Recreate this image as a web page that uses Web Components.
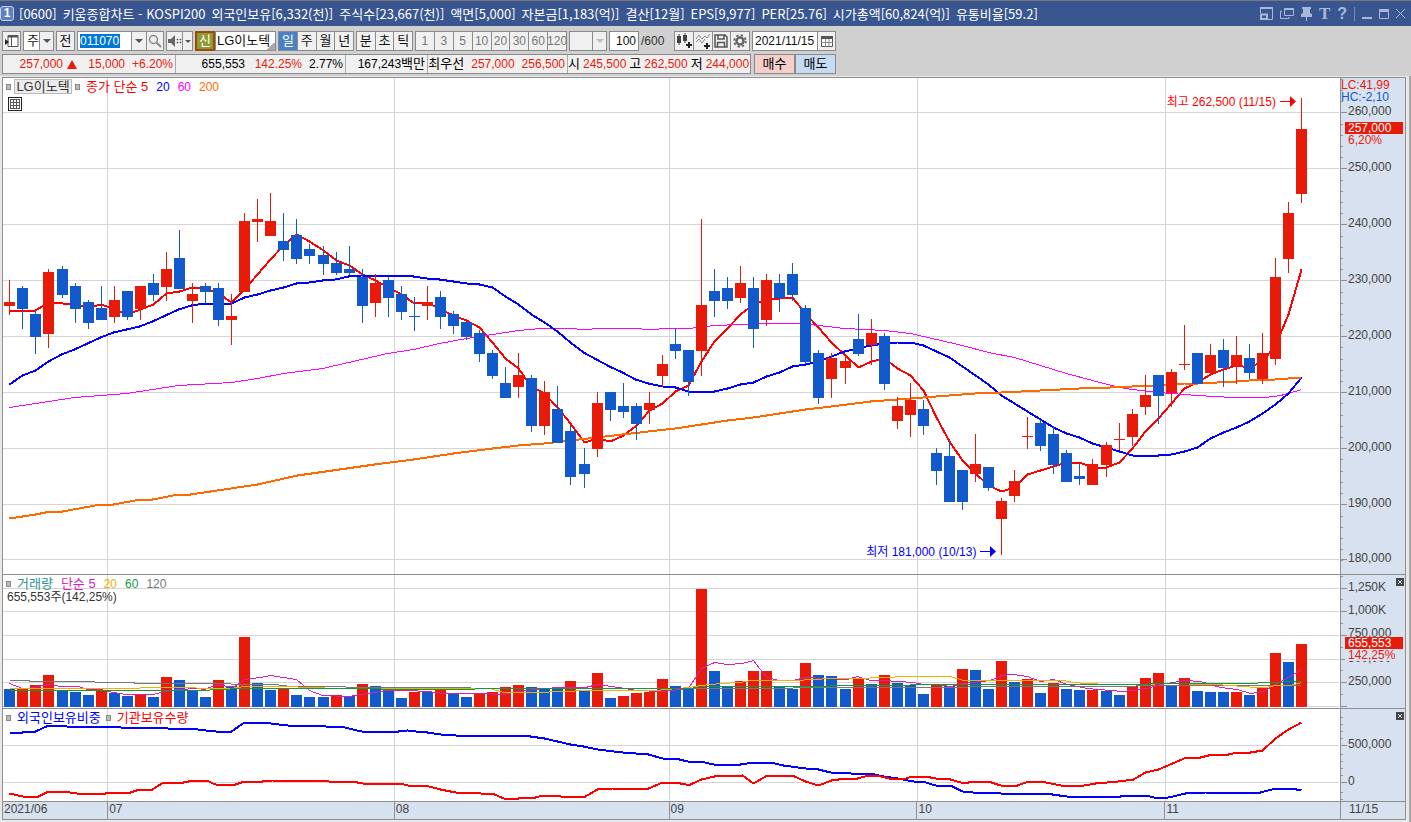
<!DOCTYPE html>
<html lang="ko">
<head>
<meta charset="utf-8">
<meta name="viewport" content="width=device-width, initial-scale=1">
<title>[0600] 키움종합차트</title>
<style>
  html, body { margin: 0; }
  body { min-height: 100vh; display: flex; flex-direction: column; background: #e8e8e8;
         font: 12px/14px "Liberation Sans", "Noto Sans CJK KR", sans-serif; color: #000; }
</style>
</head>
<body>
<hts-window></hts-window>

<script>
/* ---------- data ---------- */

/* One candle per trading day: direction, high, body top, body bottom, low (chart units, y down). */
const CANDLES = `R280,302,306,315 B286,288,309,329 B310,314,337,354 R269,272,334,348 B266,269,295,298
B283,286,309,323 B300,302,323,329 B286,308,320,320 R286,300,317,323 B291,291,317,320 R286,286,309,320
B274,283,295,301 R252,269,287,301 B230,258,289,289 R283,294,301,323 B283,286,292,303 B283,288,320,326
R294,316,320,345 R213,221,292,292 R199,219,222,242 R193,221,236,236 B213,241,250,261 B219,235,259,264
B244,249,256,264 B246,255,264,275 B252,263,273,275 B246,269,273,275 B269,277,306,323 R274,283,303,317
B277,280,298,317 B286,294,312,320 B297,316,317,331 R286,302,306,320 B291,297,317,329 B311,314,326,334
B322,322,337,340 B330,333,354,362 B350,353,376,379 B367,383,398,398 R353,375,387,398 B375,378,426,432
R381,392,426,435 B386,409,443,443 B425,431,477,485 B448,464,474,488 R392,403,449,457 B392,392,410,421
B383,406,412,418 B403,406,424,440 R392,403,410,424 R355,364,376,387 B328,344,351,359 B350,350,382,396
R219,305,351,376 B269,291,301,317 B277,288,301,309 R266,283,298,303 B277,288,329,348 R274,280,320,326
B274,283,298,312 B263,274,295,301 B305,308,362,364 B350,353,398,404 R353,358,379,398 R355,361,368,384
B314,339,354,356 R319,333,345,365 B333,336,384,390 R397,406,421,429 R383,400,415,437 B400,409,426,435
B448,453,471,485 B441,456,502,502 B470,470,502,510 R434,464,474,482 B467,467,488,491 R498,501,519,555
R470,481,496,502 R417,436,437,449 B420,423,446,451 B426,434,465,474 B450,453,482,482 B464,476,479,485
R459,464,485,485 R442,445,465,477 R423,439,440,450 R409,414,437,446 R375,395,407,415 B375,375,396,424
R369,372,393,407 R325,364,365,370 B353,353,384,384 R344,355,373,375 B339,350,368,387 R336,355,366,384
B344,358,373,379 R333,353,379,384 R258,277,359,365 R202,213,259,273 R98,129,194,203`
  .trim().split(/\s+/).map(s => [s[0], ...s.slice(1).split(",").map(Number)]);

/* Volume columns: direction and top edge. */
const VOLUMES = `B689 R689 R685 R675 B691 B692 B695 R691 B693 B696 R695 B697 R677 B680 B691 B697 R680 B686 R637 B683
B690 R688 B695 B697 B697 R695 B696 R684 B686 B687 B698 R692 B692 R690 B694 B697 R693 R692 R687 R685
B687 B688 B688 R681 B690 R673 B698 R696 R693 R692 R679 B686 B689 R589 B671 B686 R681 R671 R671 B687
B689 R663 B675 B676 B689 R678 B684 R675 B683 B685 B694 R685 B686 R669 B670 B689 R661 B682 R679 B693
R683 B689 B690 R690 B691 B695 R686 R678 R673 B686 R678 B691 B692 B692 R692 B695 R688 R653 B662 R644`
  .trim().split(/\s+/).map(s => [s[0], Number(s.slice(1))]);

const UP = "#e81a09", DOWN = "#125acb";
const dayX = i => Math.round(9.3 + i * 13.05);

/* The five-day average follows from the closes. */
const closes = CANDLES.map(c => c[0] === "R" ? c[2] : c[3]);
const ma5 = closes.map((_, i) => {
  const y = i < 3 ? 310 : i === 3 ? 302 : closes.slice(i - 4, i + 1).reduce((a, b) => a + b) / 5;
  return dayX(i) + "," + Math.round(y);
}).join(" ");

const PANES = {
  price: {
    top: 78, height: 496,
    rows: [112, 168, 224, 280, 336, 392, 448, 504, 559],
    minor: Array.from({ length: 44 }, (_, i) => Math.round(78.7 + i * 11.2)).filter(y => y < 574),
    under: [
      ["#f00", 2, ma5],
      ["#f0f", 1, "9,407 35,403 74,397 126,393 178,385 231,382 257,378 283,373 322,368 348,362 374,356 387,353 413,349 439,343 466,338 492,334 518,330 540,328 570,328 583,329 600,328 635,328 648,329 669,328 688,328 714,325 740,324 766,323 800,323 818,325 844,328 884,330 910,333 936,339 962,345 988,352 1014,357 1040,365 1066,373 1092,380 1119,387 1132,389 1158,392 1197,395 1232,397 1265,397 1280,395 1288,393 1301,389"],
      ["#00f", 2, "9,384 22,375 35,370 48,361 61,354 74,349 87,343 100,337 113,332 126,329 139,326 152,321 165,315 178,309 191,305 204,303 231,303 244,297 257,294 270,290 283,287 296,283 309,282 322,280 335,279 348,276 361,275 400,275 413,276 426,278 439,279 453,281 466,283 479,284 492,287 505,296 518,304 531,314 544,322 557,331 570,342 583,352 596,359 609,366 622,372 635,379 648,383 662,386 675,387 688,391 714,391 727,388 740,384 753,382 766,376 779,372 792,366 805,364 818,361 831,356 844,351 857,348 870,345 884,343 897,342 910,342 923,345 936,351 949,357 962,366 975,375 988,384 1001,395 1014,403 1027,411 1040,419 1053,427 1066,433 1079,437 1092,443 1106,447 1119,451 1132,455 1158,455 1171,454 1184,451 1197,447 1210,438 1223,432 1236,427 1249,421 1262,413 1275,404 1288,393 1301,377"],
      ["#ff6a00", 2, "9,518 35,514 50,511 62,511 100,504 113,504 140,499 152,499 178,494 190,494 257,484 297,475 360,466 374,464 413,459 453,453 492,448 518,445 544,443 570,440 596,437 622,434 648,431 675,428 701,424 727,420 753,417 779,413 805,409 831,406 870,401 897,399 910,398 936,396 975,393 1001,392 1040,390 1079,388 1110,387 1132,386 1158,385 1184,383 1197,383 1236,381 1249,380 1275,379 1301,377"]
    ],
    over: [],
    labels: [
      ["low", 85, "LC:41,99", "red"], ["low", 97, "HC:-2,10", "blue"],
      ["", 111, "260,000"], ["", 167, "250,000"], ["", 223, "240,000"], ["", 279, "230,000"], ["", 335, "220,000"],
      ["", 391, "210,000"], ["", 447, "200,000"], ["", 503, "190,000"], ["", 558, "180,000"],
      ["tag", 128, "257,000"], ["under", 140, "6,20%"]
    ]
  },
  volume: {
    top: 575, height: 133,
    rows: [588, 611, 635, 659, 682, 706],
    minor: [576, 599, 623, 647, 670, 694],
    under: [],
    over: [
      ["#777", 1, "9,680 28,680 30,681 93,681 96,682 133,682 135,683 220,683 240,684 275,684 290,686 340,686 350,687 450,687 490,688 780,688 805,687 960,687 975,686 1301,685"],
      ["#d81fb5", 1, "9,683 22,688 28,688 48,684 61,686 78,686 87,689 100,689 113,692 126,694 152,694 165,691 178,689 197,688 204,689 215,685 234,686 244,679 260,677 270,675 283,677 296,679 309,690 322,695 348,696 361,694 374,692 387,690 407,690 427,691 443,693 480,693 503,694 518,691 533,689 558,687 585,687 597,684 618,687 637,690 660,691 672,690 688,688 701,668 714,662 727,664 742,663 753,660 766,677 779,680 793,680 805,677 847,679 857,676 870,680 883,680 913,682 923,684 937,684 950,686 963,683 990,680 1001,675 1013,674 1027,676 1040,681 1053,679 1067,684 1087,688 1110,690 1123,691 1147,688 1160,684 1185,680 1200,681 1220,687 1237,689 1250,693 1263,691 1275,684 1288,677 1301,669"],
      ["#efb000", 1, "9,688 120,688 160,687 230,688 244,686 290,686 305,687 343,688 490,688 503,692 537,692 560,691 590,690 655,690 688,687 701,685 720,683 740,682 750,680 795,680 813,679 830,678 860,678 880,677 910,676 950,676 963,680 1063,680 1073,682 1085,683 1110,684 1150,684 1160,683 1215,684 1243,686 1256,687 1265,687 1275,685 1290,685 1301,682"],
      ["#109a3c", 1, "9,690 200,690 240,688 360,688 400,689 550,688 690,688 700,686 790,686 870,685 950,684 1050,684 1250,683 1265,682 1301,681"]
    ],
    labels: [
      ["", 587, "1,250K"], ["", 610, "1,000K"], ["", 633, "750,000"], ["", 658, "500,000"], ["", 681, "250,000"],
      ["tag", 643, "655,553"], ["under", 655, "142,25%"]
    ]
  },
  holding: {
    top: 709, height: 92,
    rows: [745, 782],
    minor: [717, 724, 731, 738, 754, 761, 768, 775, 792, 799],
    under: [],
    over: [
      ["#00f", 2, "9,732 22,732 26,731 35,731 48,725 62,725 66,726 117,726 120,727 163,727 167,728 190,728 205,730 215,731 231,731 244,722 257,722 270,723 287,725 309,725 325,726 340,726 361,731 398,731 407,730 415,731 427,732 440,734 455,735 510,735 515,735 530,736 544,738 557,741 570,744 583,746 597,749 622,752 648,754 662,758 675,758 687,761 700,761 713,764 740,764 753,762 770,762 783,765 805,768 818,769 830,772 850,773 870,773 883,776 897,778 913,781 922,781 935,785 950,785 962,791 972,792 1000,793 1025,793 1052,794 1066,796 1120,796 1127,795 1145,795 1158,798 1168,797 1185,793 1205,792 1260,792 1275,788 1291,788 1301,790"],
      ["#f00", 2, "9,793 22,796 38,796 48,791 63,791 76,793 105,793 112,792 130,792 139,789 152,789 163,782 183,782 193,780 206,780 215,784 235,784 244,781 262,781 272,780 320,780 328,781 352,781 362,783 400,783 407,785 425,785 440,789 455,792 480,793 492,793 503,798 518,798 525,797 535,797 542,795 556,795 560,796 585,796 597,789 612,788 648,788 662,782 675,782 685,784 690,784 701,779 714,776 742,775 753,783 767,775 792,775 805,781 818,785 831,780 845,778 857,778 868,775 877,775 888,778 903,779 911,776 925,776 935,778 950,779 960,782 968,782 972,781 988,781 1000,785 1017,785 1028,781 1041,781 1060,785 1078,786 1095,783 1107,782 1118,781 1133,779 1145,772 1158,769 1172,763 1186,757 1200,757 1212,754 1228,754 1237,752 1250,752 1262,750 1275,738 1288,729 1301,722"]
    ],
    labels: [["", 744, "500,000"], ["", 781, "0"]]
  }
};
const MONTH_X = [107, 394, 669, 917, 1165];

/* ---------- helpers ---------- */

function define(name, css, html, setup) {
  const t = document.createElement("template");
  t.innerHTML = `<style>*,*::before{box-sizing:border-box}${css}</style>${html}`;
  customElements.define(name, class extends HTMLElement {
    connectedCallback() {
      if (this.shadowRoot) return;
      const root = this.attachShadow({ mode: "open" });
      root.append(t.content.cloneNode(true));
      if (setup) setup(this, root);
    }
  });
}

/* ---------- small controls ---------- */

define("tool-button", `
  :host { display: flex; flex: 1; min-width: 0; }
  button { flex: 1; min-width: 0; padding: 0; border: 0; background: #f0f0f0; color: inherit; font: inherit;
           display: flex; align-items: center; justify-content: center; white-space: nowrap; }
  :host([on]) button { background: #4a80c4; color: #fff; }
`, `<button type="button"><slot></slot></button>`, (el, root) => {
  if (el.title) root.querySelector("button").setAttribute("aria-label", el.title);
});

define("tool-group", `
  :host { display: flex; flex: none; width: var(--w); height: 20px; border: 1px solid #8a8a8a; background: #8a8a8a; gap: 1px; }
`, `<slot></slot>`);

define("drop-down", `
  :host { display: flex; flex: 1; min-width: 0; position: relative; background: #fff; }
  select { appearance: none; flex: 1; min-width: 0; width: 100%; border: 0; border-radius: 0; margin: 0; padding: 0 0 0 3px;
           background: transparent; font: inherit; color: inherit; opacity: 1; }
  .arrow { position: absolute; right: 0; top: 0; bottom: 0; width: 14px; background: #f0f0f0; border-left: 1px solid #8a8a8a;
           display: flex; align-items: center; justify-content: center; pointer-events: none; }
  :host([off]) { background: #f0f0f0; color: #aaa; }
`, `<select></select><span class="arrow"><svg width="8" height="4"><path d="M0 0h8L4 4z" fill="currentColor" opacity=".7"/></svg></span>`,
(el, root) => {
  const s = root.querySelector("select");
  s.setAttribute("aria-label", el.getAttribute("label"));
  for (const o of (el.getAttribute("options") || "").split("|")) s.add(new Option(o, o));
  s.disabled = el.hasAttribute("off");
});

/* ---------- title bar ---------- */

define("title-bar", `
  :host { display: flex; align-items: center; height: 26px; padding-right: 6px; border-top: 1px solid #777; background: #3a5690; color: #fff;
          font: 13px/18px "Noto Sans CJK KR", sans-serif; }
  .no { width: 14px; height: 15px; border: 1px solid #c9d5ee; border-radius: 3px; background: #5d7fc4; font: bold 12px/13px "Liberation Sans", sans-serif; text-align: center; }
  h1 { margin: 0 0 0 5px; font: inherit; display: flex; gap: 6px; flex: 1; white-space: nowrap; overflow: hidden; }
  nav { display: flex; align-items: center; gap: 7px; color: #a9b8d8; }
  button { padding: 0; border: 0; background: none; color: inherit; display: flex; }
  i { width: 1px; height: 14px; background: #7b8db5; }
  .t { font: bold 17px/16px "Liberation Serif", serif; }
  .q { font: bold 16px/16px "Liberation Sans", sans-serif; }
`, `
  <span class="no">1</span>
  <h1><span>[0600]</span><span>키움종합차트 - KOSPI200</span><span>외국인보유[6,332(천)]</span><span>주식수[23,667(천)]</span><span>액면[5,000]</span><span>자본금[1,183(억)]</span><span>결산[12월]</span><span>EPS[9,977]</span><span>PER[25.76]</span><span>시가총액[60,824(억)]</span><span>유통비율[59.2]</span></h1>
  <nav>
    <button type="button" aria-label="크기 변경"><svg width="13" height="13" fill="none" stroke="currentColor"><path d="M.5 6V.5h12v12H7" stroke-width="1"/><path d="M0 1h13" stroke-width="2"/><path d="M1 7.500h6v4.500H1z" stroke-width="2"/></svg></button>
    <button type="button" aria-label="새 창"><svg width="14" height="13" fill="none" stroke="currentColor"><path d="M4.5 1.500h9v7h-9z"/><path d="M4 2h10" stroke-width="2"/><path d="M2 4H.5v7.500H9V10" stroke-width="1"/></svg></button>
    <button type="button" aria-label="고정"><svg width="11" height="14" fill="currentColor"><path d="M1 0h9v2H9v4l2 1v3H0V7l2-1V2H1zM5 10h1v4H5z"/></svg></button>
    <button type="button" class="t">T</button><button type="button" class="q">?</button><i></i>
    <button type="button" aria-label="최소화"><svg width="10" height="14"><path d="M0 10h10v2H0z" fill="currentColor"/></svg></button>
    <button type="button" aria-label="최대화"><svg width="10" height="10" fill="none" stroke="currentColor"><path d="M.5.5h9v9h-9z"/><path d="M0 1.500h10" stroke-width="3"/></svg></button>
    <button type="button" aria-label="닫기"><svg width="9" height="9" stroke="currentColor"><path d="M0 0l9 9M9 0L0 9"/></svg></button>
  </nav>`);

/* ---------- tool bar ---------- */

define("tool-bar", `
  :host { display: flex; gap: 2px; height: 25px; padding: 5px 2px 0; background: #d0d0d0; color: #111; font-size: 13px; white-space: nowrap; }
  input { border: 0; border-radius: 0; margin: 0; padding: 0; font: inherit; font-size: 12px; color: inherit; background: #fff; min-width: 0; width: 100%; height: 18px; }
  .code input { flex: none; width: 53px; padding-left: 2px; color: #fff; background: linear-gradient(#0078d7, #0078d7) 2px 2px / 40px 14px no-repeat #fff; }
  .num { color: #777; font-size: 12px; }
  .badge { flex: none; width: 20px; background: #8f9c34; color: #fff; display: flex; align-items: center; justify-content: center; border: 2px solid #9c4a0a; margin: -1px 0 -1px -1px; }
  .name { flex: 1; background: linear-gradient(135deg, transparent 50%, #aaa 50%) right bottom / 8px 8px no-repeat #fff; padding-left: 1px; line-height: 17px; }
  .max { flex: none; align-self: center; font-size: 12px; color: #333; width: 31px; }
  .w16 { flex: none; width: 15px; } .w14 { flex: none; width: 14px; } .w17 { flex: none; width: 17px; }
  .amount input { text-align: right; padding-right: 2px; }
  .date input { padding-left: 2px; }
`, `
  <tool-group style="--w:19px"><tool-button title="패널"><svg width="14" height="14"><path d="M3 1.500h10v11H3z" fill="#fff" stroke="#555"/><path d="M3 1h10v2.500H3zM6 3h1v9H6z" fill="#555"/><path d="M0 5l4 3-4 3z" fill="#222"/></svg></tool-button></tool-group>
  <tool-group style="--w:31px"><drop-down label="종목 구분" options="주|업|선"></drop-down></tool-group>
  <tool-group style="--w:19px"><tool-button>전</tool-button></tool-group>
  <tool-group style="--w:87px" class="code"><input aria-label="종목코드" value="011070"><tool-button class="w14" title="최근 종목"><svg width="8" height="4"><path d="M0 0h8L4 4z" fill="#555"/></svg></tool-button><tool-button title="검색"><svg width="14" height="14" fill="none" stroke="#888"><circle cx="5.500" cy="5.500" r="4" stroke-width="1.500"/><path d="M8.500 8.500L13 13" stroke-width="2"/></svg></tool-button></tool-group>
  <tool-group style="--w:27px"><tool-button class="w16" title="소리"><svg width="14" height="12"><path d="M0 4h3l4-4v12L3 8H0z" fill="#666"/><path d="M9 4h1v1H9zM9 7h1v1H9zM12 4h1v1h-1zM12 7h1v1h-1z" fill="#444" stroke="#444" stroke-width=".5"/></svg></tool-button><tool-button title="소리 설정"><svg width="6" height="3"><path d="M0 0h6L3 3z" fill="#555"/></svg></tool-button></tool-group>
  <tool-group style="--w:81px"><span class="badge">신</span><span class="name">LG이노텍</span></tool-group>
  <tool-group style="--w:76px"><tool-button on>일</tool-button><tool-button>주</tool-button><tool-button>월</tool-button><tool-button>년</tool-button></tool-group>
  <tool-group style="--w:57px"><tool-button>분</tool-button><tool-button>초</tool-button><tool-button>틱</tool-button></tool-group>
  <tool-group style="--w:152px" class="num"><tool-button>1</tool-button><tool-button>3</tool-button><tool-button>5</tool-button><tool-button>10</tool-button><tool-button>20</tool-button><tool-button>30</tool-button><tool-button>60</tool-button><tool-button>120</tool-button></tool-group>
  <tool-group style="--w:38px"><drop-down off label="사용자 주기" options=" "></drop-down></tool-group>
  <tool-group style="--w:30px" class="amount"><input aria-label="조회 개수" value="100"></tool-group>
  <span class="max">/600</span>
  <tool-group style="--w:76px"><tool-button title="차트 유형"><svg width="16" height="16"><path d="M1 3h4v7H1zM7 2h4v6H7zM2.500 1h1v11h-1zM8.500 0h1v10h-1z" fill="#444"/><path d="M10 11h6v2h-6zM12 9h2v6h-2z" fill="#222"/></svg></tool-button><tool-button title="지표 추가"><svg width="16" height="16" fill="none"><path d="M1 6l3-4 3 4 3-3 2 2 3-4M1 9l3-3 3 4 3-4" stroke="#888"/><path d="M9 12h6v2H9zM11 10h2v6h-2z" fill="#222"/></svg></tool-button><tool-button title="저장"><svg width="14" height="14" fill="none" stroke="#555" stroke-width="1.500"><path d="M1 1h10l2 2v10H1zM4 1v4h6V1M3.500 13V8.500h7V13"/></svg></tool-button><tool-button title="설정"><svg width="14" height="14" fill="none" stroke="#666"><circle cx="7" cy="7" r="3.500" stroke-width="2.500"/><circle cx="7" cy="7" r="5.700" stroke-width="2" stroke-dasharray="2.240 2.240"/></svg></tool-button></tool-group>
  <tool-group style="--w:84px" class="date"><input aria-label="기준일" value="2021/11/15"><tool-button class="w17" title="달력"><svg width="12" height="12"><path d="M.5 1.500h11v10H.5z" fill="#fff" stroke="#555"/><path d="M0 1h12v3H0z" fill="#555"/><path d="M0 7.500h12M4.500 4v8M8 4v8" stroke="#888"/></svg></tool-button></tool-group>`);

/* ---------- quote bar ---------- */

define("quote-bar", `
  :host { display: flex; gap: 3px; padding: 3px 2px 2px; background: #d0d0d0; white-space: nowrap; }
  .box { display: flex; flex: none; width: 749px; height: 20px; border: 1px solid #8a8a8a; background: #f0f0f0; line-height: 18px; }
  .part { display: flex; flex: none; align-items: center; gap: 4px; border-right: 1px solid #aaa; padding-right: 2px; justify-content: flex-end; }
  .part.e { border: 0; padding-right: 2px; gap: 3px; flex: 1; }
  .a { width: 173px; } .b { width: 170px; } .c { width: 82px; } .d { width: 140px; }
  .red { color: #e81a09; }
  .k { font-size: 13px; }
  .n { text-align: right; }
  .a .n { width: 44px; } .b .n { width: 53px; } .b .s { width: 37px; } .d { gap: 7px; }
  button { width: 41px; height: 20px; margin: 0; padding: 0; border: 1px solid #8a8a8a; font: inherit; font-size: 13px; line-height: 16px; }
  .buy { background: #f6cfca; } .sell { background: #c6dcf3; margin-left: -3px; }
`, `
  <div class="box">
    <div class="part a red"><span class="n">257,000</span><svg width="10" height="9"><path d="M5 0l5 9H0z" fill="#e81a09"/></svg><span class="n">15,000</span><span class="n">+6.20%</span></div>
    <div class="part b"><span class="n">655,553</span><span class="n red">142.25%</span><span class="n s">2.77%</span></div>
    <div class="part c"><span>167,243<span class="k">백만</span></span></div>
    <div class="part d"><span class="k">최우선</span><span class="red">257,000</span><span class="red">256,500</span></div>
    <div class="part e"><span class="k">시</span><span class="red">245,500</span><span class="k">고</span><span class="red">262,500</span><span class="k">저</span><span class="red">244,000</span></div>
  </div>
  <button type="button" class="buy">매수</button><button type="button" class="sell">매도</button>`);

/* ---------- chart pane: plot on the left, value scale on the right ---------- */

define("chart-pane", `
  :host { display: flex; flex: var(--share) 1 0; min-height: 0; border-bottom: 1px solid #8f8f8f; box-sizing: content-box; }
  .plot { flex: 1; position: relative; background: #fff; overflow: hidden; }
  .scale { flex: none; width: 65px; position: relative; border-left: 1px solid #8f8f8f; background: #d7e1ef; color: #444; overflow: hidden; }
  svg.fill { position: absolute; inset: 0; width: 100%; height: 100%; }
  .head { position: absolute; left: 3px; top: 1px; }
  .v { position: absolute; left: 7px; margin-top: -6px; line-height: 12px; white-space: nowrap; }
  .low { left: 0; } .red { color: #e81a09; } .blue { color: #125acb; }
  .tag { left: 4px; width: 58px; padding-left: 3px; background: #e81a09; color: #fff; }
  .under { left: 4px; width: 58px; padding-left: 3px; background: #d7e1ef; color: #e81a09; }
  .close { position: absolute; right: 1px; top: 3px; width: 8px; height: 8px; padding: 0; border: 0; background: #444; display: flex; }
`, `<div class="plot"><svg class="fill" preserveAspectRatio="none" shape-rendering="crispEdges" aria-hidden="true"></svg><div class="head"><slot></slot></div><slot name="note"></slot></div>
    <div class="scale"><svg class="fill" preserveAspectRatio="none" shape-rendering="crispEdges" aria-hidden="true"></svg></div>`,
(el, root) => {
  const kind = el.getAttribute("kind"), p = PANES[kind];
  el.style.setProperty("--share", p.height);
  const line = ([color, w, pts]) => `<polyline points="${pts}" transform="translate(.5 .5)" fill="none" stroke="${color}" stroke-width="${w}" stroke-linejoin="round"/>`;
  let s = "";
  for (const y of p.rows) s += `<path d="M3 ${y}h1336v1H3z" fill="#d5d5d5"/>`;
  for (const x of MONTH_X) s += `<path d="M${x} ${p.top}h1v${p.height}h-1z" fill="#d5d5d5"/>`;
  s += p.under.map(line).join("");
  if (kind === "price") CANDLES.forEach(([d, hi, a, b, lo], i) => {
    const x = dayX(i), f = d === "R" ? UP : DOWN;
    s += `<path d="M${x} ${hi}h1v${lo - hi}h-1zM${x - 5} ${a}h11v${b - a}h-11z" fill="${f}" fill-rule="nonzero"/>`;
  });
  if (kind === "volume") VOLUMES.forEach(([d, y], i) => {
    s += `<path d="M${dayX(i) - 5} ${y}h11V707h-11z" fill="${d === "R" ? UP : DOWN}"/>`;
  });
  s += p.over.map(line).join("");
  const [plot, scale] = root.querySelectorAll("svg.fill");
  plot.setAttribute("viewBox", `3 ${p.top} 1337 ${p.height}`);
  plot.innerHTML = s;
  scale.setAttribute("viewBox", `0 ${p.top} 64 ${p.height}`);
  scale.innerHTML = p.rows.map(y => `<path d="M0 ${y}h6v1H0z" fill="#8f8f8f"/>`).join("") +
                    p.minor.map(y => `<path d="M0 ${y}h2v1H0z" fill="#8f8f8f"/>`).join("");
  const box = root.querySelector(".scale");
  for (const [cls, y, text, tone] of p.labels) {
    const v = document.createElement("span");
    v.className = `v ${cls} ${tone || ""}`;
    v.style.top = (y - p.top) / p.height * 100 + "%";
    v.textContent = text;
    box.append(v);
  }
  if (kind !== "price") box.insertAdjacentHTML("beforeend",
    `<button class="close" type="button" aria-label="닫기"><svg width="8" height="8" stroke="#d7e1ef"><path d="M2 2l4 4M6 2L2 6"/></svg></button>`);
});

/* ---------- time axis ---------- */

define("time-axis", `
  :host { display: flex; flex: none; height: 17px; background: #d7e1ef; color: #444; line-height: 15px; }
  .months { flex: 1; display: flex; }
  .months span { flex: var(--d) 1 0; min-width: 0; border-left: 1px solid #8f8f8f; padding-left: 1px; }
  .months span:first-child { border: 0; }
  .now { width: 65px; border-left: 1px solid #8f8f8f; padding-left: 8px; }
`, `<div class="months"><span style="--d:104">2021/06</span><span style="--d:287">07</span><span style="--d:275">08</span><span style="--d:248">09</span><span style="--d:248">10</span><span style="--d:175">11</span></div><div class="now">11/15</div>`);

/* ---------- chart and window ---------- */

define("hts-chart", `
  :host { display: flex; flex: 1; flex-direction: column; background: #e8e8e8; border-right: 2px solid #a8a8a8; padding: 1px 3px 2px 2px; }
  .frame { flex: 1; display: flex; flex-direction: column; border: 1px solid #8f8f8f; }
  .row { display: flex; align-items: center; gap: 8px; height: 15px; }
  .row span { white-space: nowrap; }
  .k { font-size: 13px; }
  .dot { flex: none; width: 5px; height: 6px; padding: 0; border: 1px solid #888; background: #bbb; margin-right: -2px; }
  .dot.tight { margin-right: -5px; }
  .dot.next { margin-left: -3px; }
  .name { margin: 0 -5px 0 0; height: 15px; width: 58px; padding: 0; border: 1px solid #bbb; background: #ececec; font: inherit; font-size: 13px; line-height: 13px; color: #333; white-space: nowrap; }
  .grid { margin: 3px 0 0 2px; width: 14px; height: 14px; padding: 0; border: 1px solid #222; background: #fff; display: flex; align-items: center; justify-content: center; }
  .note { position: absolute; display: flex; align-items: center; gap: 4px; height: 14px; margin-top: -7px; white-space: nowrap; }
  .high { right: 3.3%; top: 4.8%; color: #f00; }
  .low { right: 25.7%; top: 95.5%; color: #00f; }
  .sum { margin: -1px 0 0 1px; color: #333; }
`, `
  <div class="frame">
    <chart-pane kind="price">
      <div class="row"><button class="dot tight" type="button" aria-label="종목 표시"></button><button class="name" type="button">LG이노텍</button><button class="dot" type="button" aria-label="이동평균 표시"></button><span class="k" style="color:#f00">종가 단순 5</span><span style="color:#00f">20</span><span style="color:#f0f">60</span><span style="color:#ff6a00">200</span></div>
      <button class="grid" type="button" aria-label="데이터 표"><svg width="10" height="10" fill="none" stroke="#555" shape-rendering="crispEdges"><path d="M.5.5h9v9h-9zM0 3.500h10M0 6.500h10M3.500 0v10M6.500 0v10"/></svg></button>
      <div class="note high" slot="note"><span>최고 262,500 (11/15)</span><svg width="16" height="11" fill="currentColor"><path d="M0 5h10V0l6 5.500-6 5.500V6H0z"/></svg></div>
      <div class="note low" slot="note"><span>최저 181,000 (10/13)</span><svg width="16" height="11" fill="currentColor"><path d="M0 5h10V0l6 5.500-6 5.500V6H0z"/></svg></div>
    </chart-pane>
    <chart-pane kind="volume">
      <div class="row"><button class="dot" type="button" aria-label="거래량 표시"></button><span class="k" style="color:#289393">거래량</span><span class="k" style="color:#d81fb5">단순 5</span><span style="color:#efb000">20</span><span style="color:#109a3c">60</span><span style="color:#777">120</span></div>
      <div class="sum">655,553주(142,25%)</div>
    </chart-pane>
    <chart-pane kind="holding">
      <div class="row"><button class="dot" type="button" aria-label="외국인 표시"></button><span class="k" style="color:#00f">외국인보유비중</span><button class="dot next" type="button" aria-label="기관 표시"></button><span class="k" style="color:#f00">기관보유수량</span></div>
    </chart-pane>
    <time-axis></time-axis>
  </div>`);

define("hts-window", `
  :host { display: flex; flex: 1; flex-direction: column; min-width: 0; }
`, `<title-bar></title-bar><tool-bar></tool-bar><quote-bar></quote-bar><hts-chart></hts-chart>`);
</script>
</body>
</html>
